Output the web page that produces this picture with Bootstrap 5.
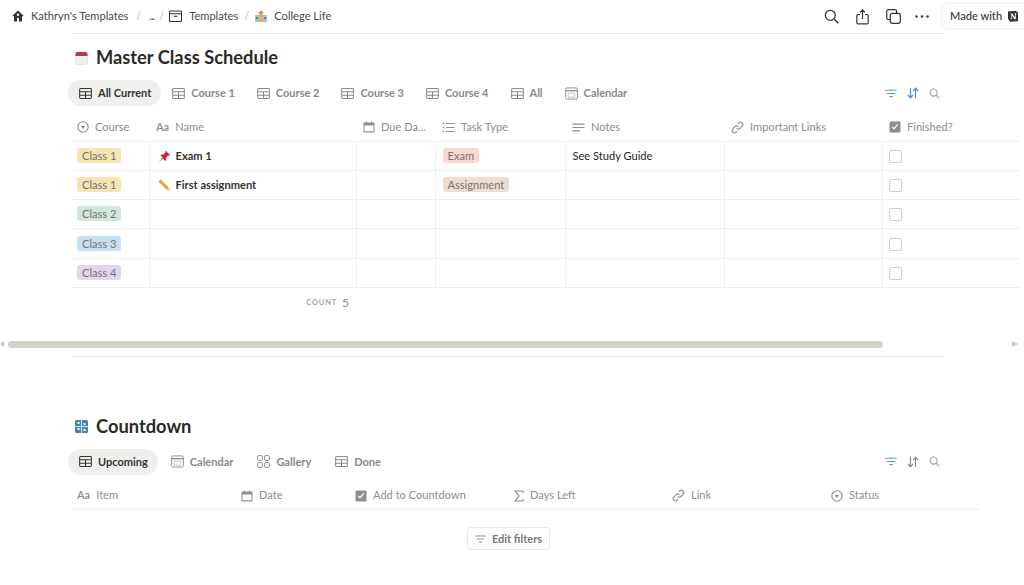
<!DOCTYPE html>
<html lang="en">
<head>
<meta charset="utf-8">
<title>Master Class Schedule</title>
<link href="https://cdn.jsdelivr.net/npm/bootstrap@5.3.0/dist/css/bootstrap.min.css" rel="stylesheet">
<style>
  body { font-family: Lato, "Noto Sans", sans-serif; color: #37352f; background: #fff; font-size: 11.1px; overflow: hidden; width: 1024px; height: 585px; }
  svg { display: block; flex: none; }
  .top-bar { height: 33px; padding: 0 0 0 12px; position: relative; }
  .crumb { color: #4a4944; gap: 7px; }
  .crumb-sep { color: #c4c3bf; margin: 0 6px; }
  .crumb-sep.is-first { margin: 0 8px; }
  .crumb-sep.is-tight { margin: 0 5px; }
  .crumb-dots { letter-spacing: -1px; }
  .top-tools { color: #37352f; margin-left: auto; margin-right: 95px; gap: 17px; }
  .top-dots { margin-left: -3px; }
  .made-with { position: absolute; right: -6px; top: 3px; width: 89px; height: 26px; border: 1px solid #eeeeec; border-radius: 6px; background: #fff; padding-left: 8px; gap: 5px; font-weight: 500; color: #37352f; }
  .page-col { margin-left: 71px; width: 874px; }
  .rule { border-top: 1px solid #e9e9e7; }
  .db-title { margin: 0; height: 46px; padding-top: 2px; font-size: 18.3px; font-weight: 700; color: #2b2a26; gap: 8px; padding-left: 4px; }
  .view-tabs { margin-left: -3px; padding-right: 5px; height: 26px; }
  .view-tab { height: 26px; padding: 0 11px; gap: 6px; color: #8b8a85; font-size: 11px; font-weight: 700; border-radius: 13px; white-space: nowrap; }
  .view-tab.is-on { background: #efefed; color: #37352f; font-weight: 700; padding-right: 10px; }
  .view-tools { margin-left: auto; gap: 10px; }
  .db-table { table-layout: fixed; margin: 7px 0 0 71px; --bs-table-border-color: #efefed; }
  .first-table { width: 949px; }
  .db-table th, .db-table td { padding: 1px 7px 0; height: 29.3px; vertical-align: middle; border-bottom: 1px solid #efefed; border-left: 1px solid #efefed; font-weight: 400; box-shadow: none; }
  .db-table th:first-child, .db-table td:first-child { border-left: 0; padding-left: 6px; }
  .db-table th { height: 28px; color: #8f8e89; border-left: 0; border-top: 0; }
  .db-table td.is-name { font-weight: 700; color: #37352f; }
  .head-cell { gap: 6px; white-space: nowrap; overflow: hidden; }
  .name-cell { gap: 5px; padding-left: 1px; }
  .tag-pill { display: inline-block; line-height: 15px; padding: 0 5px; border-radius: 3px; color: #77746a; white-space: nowrap; }
  .tag-yellow { background: #f6e5b4; }
  .tag-green { background: #d3e6dc; }
  .tag-blue { background: #c8e0f3; }
  .tag-purple { background: #e3d5ee; }
  .tag-red { background: #fbd6d2; }
  .tag-brown { background: #eeddd3; }
  .tick-box { width: 13px; height: 13px; border: 1px solid #cfcec9; border-radius: 2px; margin-left: -1px; }
  .count-row { width: 285px; height: 30px; padding-right: 7px; gap: 5px; }
  .count-label { font-size: 7.5px; letter-spacing: .8px; color: #a3a29d; font-weight: 700; }
  .count-num { font-size: 12px; color: #8f8e89; }
  .scroll-track { height: 10px; margin-top: 23px; padding-left: 8px; position: relative; }
  .scroll-thumb { width: 875px; height: 7px; background: #d3d2cb; border-radius: 4px; }
  .scroll-arrow { width: 0; height: 0; border-top: 3.5px solid transparent; border-bottom: 3.5px solid transparent; position: absolute; top: 0; }
  .scroll-arrow.is-left { left: 0; border-right: 4px solid #c9c8c2; }
  .scroll-arrow.is-right { left: 1012px; border-left: 6px solid #c9c8c2; }
  .second-rule { margin-top: 5px; }
  .second-block { margin-top: 52px; }
  .db-title-two { height: 34px; padding-left: 4px; }
  .second-tabs { margin-top: 6px; gap: 2px; }
  .wide-table { width: 909px; margin-top: 6px; }
  .wide-table th { height: 29px; }
  .edit-wrap { width: 874px; margin-top: 17px; padding-left: 396px; margin-left: 71px; }
  .edit-btn { width: 83px; height: 23px; border: 1px solid #e9e9e7; border-radius: 4px; color: #7a7974; font-weight: 700; gap: 6px; font-size: 11px; background: #fff; padding: 0; }
</style>
</head>
<body>

<svg width="0" height="0" class="position-absolute">
  <symbol id="i-table" viewBox="0 0 14 12"><path d="M1.600 .6h10.800a1 1 0 0 1 1 1v8.800a1 1 0 0 1-1 1H1.600a1 1 0 0 1-1-1V1.600a1 1 0 0 1 1-1zM.6 4.200h12.800M.6 7.800h12.800M7 4.200v7.200" fill="none" stroke="currentColor" stroke-width="1.100"/></symbol>
  <symbol id="i-calendar" viewBox="0 0 14 14"><rect x=".7" y="1" width="12.600" height="12" rx="1.500" fill="none" stroke="currentColor" stroke-width="1"/><path d="M.7 4h12.600" stroke="currentColor" stroke-width="1.400"/><path d="M3.500 6.500h7v4.500h-7z" fill="none" stroke="currentColor" stroke-width=".7" opacity=".7"/></symbol>
  <symbol id="i-filter" viewBox="0 0 14 10"><path d="M1 1.200h12M3 5h8M5.200 8.800h3.600" stroke="currentColor" stroke-width="1.400" stroke-linecap="round"/></symbol>
  <symbol id="i-sort" viewBox="0 0 12 12"><path d="M3.500 1v9.500M1 8l2.500 2.800L6 8M8.500 11V1.500M6.200 4l2.300-2.800L11 4" fill="none" stroke="currentColor" stroke-width="1.200"/></symbol>
  <symbol id="i-search" viewBox="0 0 12 12"><circle cx="5" cy="5" r="3.900" fill="none" stroke="currentColor" stroke-width="1.200"/><path d="M7.900 7.900l3.400 3.400" stroke="currentColor" stroke-width="1.300"/></symbol>
  <symbol id="i-select" viewBox="0 0 12 12"><circle cx="6" cy="6" r="5.200" fill="none" stroke="currentColor" stroke-width="1.100"/><path d="M3.800 4.900h4.400L6 7.900z" fill="currentColor"/></symbol>
  <symbol id="i-date" viewBox="0 0 12 12"><path d="M1.500 1.500h1.500V.5h1v1h4V.5h1v1h1.500a1 1 0 0 1 1 1v8a1 1 0 0 1-1 1h-9a1 1 0 0 1-1-1v-8a1 1 0 0 1 1-1zM1.500 4.500v5.800h9V4.500z" fill="currentColor" fill-rule="evenodd"/></symbol>
  <symbol id="i-list" viewBox="0 0 13 11"><path d="M4 1.500h8.500M4 5.500h8.500M4 9.500h8.500" stroke="currentColor" stroke-width="1.100"/><path d="M.8 1.500h1.400M.8 5.500h1.400M.8 9.500h1.400" stroke="currentColor" stroke-width="1.400"/></symbol>
  <symbol id="i-text" viewBox="0 0 13 9"><path d="M.5 1.200h12M.5 4.500h12M.5 7.800h7.500" stroke="currentColor" stroke-width="1.200"/></symbol>
  <symbol id="i-link" viewBox="0 0 13 13"><path d="M5.600 7.400a2.300 2.300 0 0 0 3.300 0l2.200-2.200a2.300 2.300 0 0 0-3.300-3.300l-1 1M7.400 5.600a2.300 2.300 0 0 0-3.300 0L1.900 7.800a2.300 2.300 0 0 0 3.300 3.300l1-1" fill="none" stroke="currentColor" stroke-width="1.200"/></symbol>
  <symbol id="i-check" viewBox="0 0 12 12"><path d="M1.500 .5h9a1 1 0 0 1 1 1v9a1 1 0 0 1-1 1h-9a1 1 0 0 1-1-1v-9a1 1 0 0 1 1-1zM2.800 6.300l2.300 2.400 4.100-4.900-1-.8-3.200 3.800-1.300-1.400z" fill="currentColor" fill-rule="evenodd"/></symbol>
  <symbol id="i-sum" viewBox="0 0 10 12"><path d="M9 3V1H1l4 5-4 5h8V9" fill="none" stroke="currentColor" stroke-width="1.200"/></symbol>
  <symbol id="i-gallery" viewBox="0 0 13 13"><rect x=".6" y=".6" width="4.800" height="4.800" rx="1.200" fill="none" stroke="currentColor"/><rect x="7.600" y=".6" width="4.800" height="4.800" rx="1.200" fill="none" stroke="currentColor"/><rect x=".6" y="7.600" width="4.800" height="4.800" rx="1.200" fill="none" stroke="currentColor"/><rect x="7.600" y="7.600" width="4.800" height="4.800" rx="1.200" fill="none" stroke="currentColor"/></symbol>
</svg>

<div class="top-bar d-flex align-items-center">
  <div class="crumb d-flex align-items-center">
    <svg width="12" height="12" viewBox="0 0 12 12"><path d="M6 .6L.4 5.800l.8.800.8-.7V11.400h3V8h2v3.400h3V5.900l.8.700.8-.8zM6 3.500a1.200 1.200 0 1 1 0 2.400 1.200 1.200 0 0 1 0-2.400z" fill="#37352f" fill-rule="evenodd"/></svg>
    <span>Kathryn's Templates</span>
  </div>
  <span class="crumb-sep is-first">/</span>
  <span class="crumb crumb-dots">...</span>
  <span class="crumb-sep is-tight">/</span>
  <div class="crumb d-flex align-items-center">
    <svg width="13" height="12" viewBox="0 0 13 12"><path d="M1.500 1h10a1 1 0 0 1 1 1v8.500a1 1 0 0 1-1 1h-10a1 1 0 0 1-1-1V2a1 1 0 0 1 1-1zM.5 3.700h12M4.500 6.300h4" fill="none" stroke="#37352f" stroke-width="1.100"/></svg>
    <span>Templates</span>
  </div>
  <span class="crumb-sep">/</span>
  <div class="crumb d-flex align-items-center">
    <svg width="12" height="12" viewBox="0 0 12 12"><rect x="0" y="5" width="12" height="7" fill="#9fc2d6"/><rect x="4" y="2.500" width="4" height="9.500" fill="#d9b36c"/><path d="M3 3l3-2.500L9 3z" fill="#c08a4a"/><rect x="1" y="7" width="2" height="2" fill="#5f8ba6"/><rect x="9" y="7" width="2" height="2" fill="#5f8ba6"/></svg>
    <span>College Life</span>
  </div>
  <div class="top-tools d-flex align-items-center">
    <svg width="15" height="15" viewBox="0 0 15 15"><circle cx="6.300" cy="6.300" r="5" fill="none" stroke="#37352f" stroke-width="1.300"/><path d="M10 10l4.300 4.300" stroke="#37352f" stroke-width="1.400"/></svg>
    <svg width="13" height="16" viewBox="0 0 13 16"><path d="M4 5.500H2a1.200 1.200 0 0 0-1.200 1.200v7a1.200 1.200 0 0 0 1.200 1.200h9a1.200 1.200 0 0 0 1.200-1.200v-7A1.200 1.200 0 0 0 11 5.500H9M6.500 10V1M4 3.300L6.500 .8 9 3.300" fill="none" stroke="#37352f" stroke-width="1.200"/></svg>
    <svg width="15" height="15" viewBox="0 0 15 15"><rect x=".7" y=".7" width="10" height="10" rx="2" fill="none" stroke="#37352f" stroke-width="1.200"/><rect x="4.300" y="4.300" width="10" height="10" rx="2" fill="#fff" stroke="#37352f" stroke-width="1.200"/></svg>
    <svg class="top-dots" width="14" height="3" viewBox="0 0 14 3"><circle cx="1.500" cy="1.500" r="1.200" fill="#37352f"/><circle cx="7" cy="1.500" r="1.200" fill="#37352f"/><circle cx="12.500" cy="1.500" r="1.200" fill="#37352f"/></svg>
  </div>
  <div class="made-with d-flex align-items-center">
    <span>Made with</span>
    <svg width="12" height="12" viewBox="0 0 12 12"><path d="M1 1.500L8.500 .8 11 2.600v8.600l-7.800.5L1 9z" fill="#37352f"/><path d="M3.700 3.500h1.500l2.800 4V3.800h-.7V3.300h2.200v.5h-.7v5.400H7.500L4.500 5v3.500h.8V9H3.400v-.5h.5V3.900z" fill="#fff"/></svg>
  </div>
</div>

<div class="page-col rule">
  <h1 class="db-title d-flex align-items-center">
    <svg width="13" height="14" viewBox="0 0 13 14"><rect x=".5" y="1" width="12" height="12.500" rx="2" fill="#f1f0ee" stroke="#d9d8d5" stroke-width=".6"/><path d="M.5 5V3a2 2 0 0 1 2-2h8a2 2 0 0 1 2 2v2z" fill="#a8404f"/></svg>
    <span>Master Class Schedule</span>
  </h1>
  <div class="view-tabs d-flex align-items-center">
    <div class="view-tab is-on d-flex align-items-center"><svg width="13" height="11"><use href="#i-table"/></svg><span>All Current</span></div>
    <div class="view-tab d-flex align-items-center"><svg width="13" height="11"><use href="#i-table"/></svg><span>Course 1</span></div>
    <div class="view-tab d-flex align-items-center"><svg width="13" height="11"><use href="#i-table"/></svg><span>Course 2</span></div>
    <div class="view-tab d-flex align-items-center"><svg width="13" height="11"><use href="#i-table"/></svg><span>Course 3</span></div>
    <div class="view-tab d-flex align-items-center"><svg width="13" height="11"><use href="#i-table"/></svg><span>Course 4</span></div>
    <div class="view-tab d-flex align-items-center"><svg width="13" height="11"><use href="#i-table"/></svg><span>All</span></div>
    <div class="view-tab d-flex align-items-center"><svg width="13" height="13"><use href="#i-calendar"/></svg><span>Calendar</span></div>
    <div class="view-tools d-flex align-items-center">
      <svg width="12" height="9" color="#4a90d9"><use href="#i-filter"/></svg>
      <svg width="12" height="12" color="#4a90d9"><use href="#i-sort"/></svg>
      <svg width="11" height="11" color="#a3a29d"><use href="#i-search"/></svg>
    </div>
  </div>
</div>

<table class="table db-table first-table">
  <colgroup><col style="width:78px"><col style="width:207px"><col style="width:79px"><col style="width:130px"><col style="width:159px"><col style="width:158px"><col style="width:138px"></colgroup>
  <thead>
    <tr>
      <th><div class="head-cell d-flex align-items-center"><svg width="12" height="12"><use href="#i-select"/></svg>Course</div></th>
      <th><div class="head-cell d-flex align-items-center"><span class="fw-semibold">Aa</span>Name</div></th>
      <th><div class="head-cell d-flex align-items-center"><svg width="12" height="12"><use href="#i-date"/></svg>Due Da...</div></th>
      <th><div class="head-cell d-flex align-items-center"><svg width="13" height="11"><use href="#i-list"/></svg>Task Type</div></th>
      <th><div class="head-cell d-flex align-items-center"><svg width="13" height="9"><use href="#i-text"/></svg>Notes</div></th>
      <th><div class="head-cell d-flex align-items-center"><svg width="13" height="13"><use href="#i-link"/></svg>Important Links</div></th>
      <th><div class="head-cell d-flex align-items-center"><svg width="12" height="12"><use href="#i-check"/></svg>Finished?</div></th>
    </tr>
  </thead>
  <tbody>
    <tr>
      <td><span class="tag-pill tag-yellow">Class 1</span></td>
      <td class="is-name"><div class="name-cell d-flex align-items-center"><svg width="13" height="13" viewBox="0 0 13 13"><path d="M7.500 .8l4.700 4.200-1 .8-1-.3-2.300 2.500.3 2-1 .9-2.300-2.500L1 12l3.600-4.500L2.500 5.400l.9-1 2 .2 2-2.200-.3-1z" fill="#c92a3a"/></svg><span>Exam 1</span></div></td>
      <td></td>
      <td><span class="tag-pill tag-red">Exam</span></td>
      <td>See Study Guide</td>
      <td></td>
      <td><div class="tick-box"></div></td>
    </tr>
    <tr>
      <td><span class="tag-pill tag-yellow">Class 1</span></td>
      <td class="is-name"><div class="name-cell d-flex align-items-center"><svg width="13" height="13" viewBox="0 0 13 13"><path d="M.8 3L3 .8l8 8-2.200 2.200z" fill="#e8a33c"/><path d="M.4 2.500L2.500.4 3.500 1.300 1.300 3.500z" fill="#e58b8b"/><path d="M11 8.800L8.800 11l3.700 1.500z" fill="#e9cfa6"/></svg><span>First assignment</span></div></td>
      <td></td>
      <td><span class="tag-pill tag-brown">Assignment</span></td>
      <td></td>
      <td></td>
      <td><div class="tick-box"></div></td>
    </tr>
    <tr><td><span class="tag-pill tag-green">Class 2</span></td><td></td><td></td><td></td><td></td><td></td><td><div class="tick-box"></div></td></tr>
    <tr><td><span class="tag-pill tag-blue">Class 3</span></td><td></td><td></td><td></td><td></td><td></td><td><div class="tick-box"></div></td></tr>
    <tr><td><span class="tag-pill tag-purple">Class 4</span></td><td></td><td></td><td></td><td></td><td></td><td><div class="tick-box"></div></td></tr>
  </tbody>
</table>

<div class="page-col count-row d-flex align-items-center justify-content-end"><span class="count-label">COUNT</span><span class="count-num">5</span></div>

<div class="scroll-track">
  <div class="scroll-arrow is-left"></div>
  <div class="scroll-thumb"></div>
  <div class="scroll-arrow is-right"></div>
</div>

<div class="page-col rule second-rule"></div>

<div class="page-col second-block">
  <h2 class="db-title db-title-two d-flex align-items-center">
    <svg width="13" height="13" viewBox="0 0 13 13"><rect width="13" height="13" rx="1.500" fill="#3f85b5"/><path d="M6.500 0v13M0 6.500h13" stroke="#fff" stroke-width=".8"/><rect x="2.500" y="2" width="2" height="2" fill="#fff"/><rect x="8.500" y="3" width="2" height="2" fill="#fff"/><rect x="2.500" y="8" width="2" height="2" fill="#fff"/><rect x="8.500" y="9" width="2" height="2" fill="#fff"/></svg>
    <span>Countdown</span>
  </h2>
  <div class="view-tabs second-tabs d-flex align-items-center">
    <div class="view-tab is-on d-flex align-items-center"><svg width="13" height="11"><use href="#i-table"/></svg><span>Upcoming</span></div>
    <div class="view-tab d-flex align-items-center"><svg width="13" height="13"><use href="#i-calendar"/></svg><span>Calendar</span></div>
    <div class="view-tab d-flex align-items-center"><svg width="13" height="13"><use href="#i-gallery"/></svg><span>Gallery</span></div>
    <div class="view-tab d-flex align-items-center"><svg width="13" height="11"><use href="#i-table"/></svg><span>Done</span></div>
    <div class="view-tools d-flex align-items-center">
      <svg width="12" height="9" color="#4a90d9"><use href="#i-filter"/></svg>
      <svg width="12" height="12" color="#8f8e89"><use href="#i-sort"/></svg>
      <svg width="11" height="11" color="#a3a29d"><use href="#i-search"/></svg>
    </div>
  </div>
</div>

<table class="table db-table wide-table">
  <colgroup><col style="width:163px"><col style="width:114px"><col style="width:159px"><col style="width:158px"><col style="width:159px"><col style="width:156px"></colgroup>
  <thead>
    <tr>
      <th><div class="head-cell d-flex align-items-center"><span class="fw-semibold">Aa</span>Item</div></th>
      <th><div class="head-cell d-flex align-items-center"><svg width="12" height="12"><use href="#i-date"/></svg>Date</div></th>
      <th><div class="head-cell d-flex align-items-center"><svg width="12" height="12"><use href="#i-check"/></svg>Add to Countdown</div></th>
      <th><div class="head-cell d-flex align-items-center"><svg width="10" height="12"><use href="#i-sum"/></svg>Days Left</div></th>
      <th><div class="head-cell d-flex align-items-center"><svg width="13" height="13"><use href="#i-link"/></svg>Link</div></th>
      <th><div class="head-cell d-flex align-items-center"><svg width="12" height="12"><use href="#i-select"/></svg>Status</div></th>
    </tr>
  </thead>
</table>

<div class="edit-wrap">
  <button type="button" class="btn edit-btn d-flex align-items-center justify-content-center">
    <svg width="11" height="8" color="#8f8e89"><use href="#i-filter"/></svg>
    <span>Edit filters</span>
  </button>
</div>

<script src="https://cdn.jsdelivr.net/npm/bootstrap@5.3.0/dist/js/bootstrap.bundle.min.js"></script>
</body>
</html>
